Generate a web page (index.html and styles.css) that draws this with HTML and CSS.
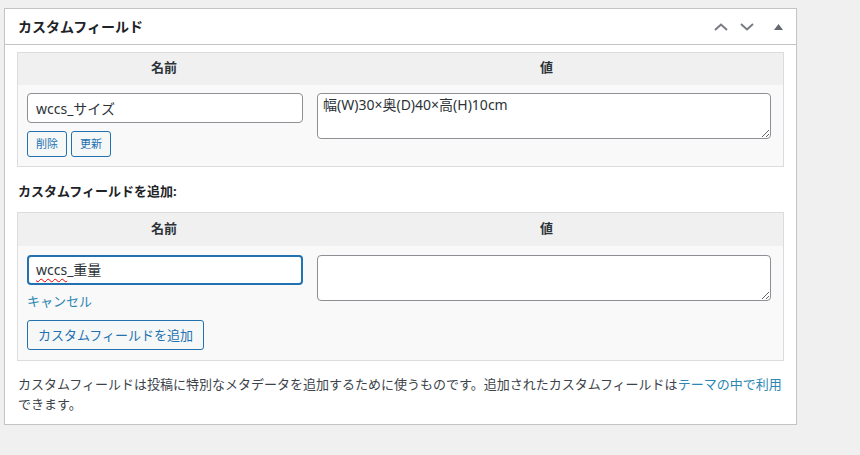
FILE: index.html
```html
<!DOCTYPE html>
<html lang="ja">
<head>
<meta charset="utf-8">
<title>カスタムフィールド</title>
<link rel="stylesheet" href="styles.css">
</head>
<body>
<div class="postbox">
  <div class="postbox-header">
    <h2 class="hndle">カスタムフィールド</h2>
    <div class="handle-actions">
      <button class="handle-btn" aria-label="上へ移動">
        <svg width="14" height="8" viewBox="0 0 14 8"><path d="M1 7 L7 1.5 L13 7" fill="none" stroke="#787c82" stroke-width="2"/></svg>
      </button>
      <button class="handle-btn" aria-label="下へ移動">
        <svg width="14" height="8" viewBox="0 0 14 8"><path d="M1 1 L7 6.5 L13 1" fill="none" stroke="#787c82" stroke-width="2"/></svg>
      </button>
      <button class="handle-btn toggle" aria-label="パネルを切り替え">
        <svg width="9" height="6" viewBox="0 0 9 6"><path d="M4.5 0 L9 6 L0 6 Z" fill="#646970"/></svg>
      </button>
    </div>
  </div>
  <div class="inside">
    <div class="list-table">
      <div class="thead">
        <div class="th name-col">名前</div>
        <div class="th">値</div>
      </div>
      <div class="tbody">
        <div class="td name-col">
          <input class="text" type="text" value="wccs_サイズ">
          <div class="row-actions">
            <button class="button small">削除</button>
            <button class="button small">更新</button>
          </div>
        </div>
        <div class="td">
          <textarea class="value-area tall">幅(W)30×奥(D)40×高(H)10cm</textarea>
        </div>
      </div>
    </div>

    <p class="add-title">カスタムフィールドを追加:</p>

    <div class="list-table add">
      <div class="thead">
        <div class="th name-col">名前</div>
        <div class="th">値</div>
      </div>
      <div class="tbody">
        <div class="td name-col">
          <div class="text focused"><span class="misspelled">wccs</span>_重量</div>
          <a class="cancel" href="#">キャンセル</a>
          <button class="button">カスタムフィールドを追加</button>
        </div>
        <div class="td">
          <textarea class="value-area"></textarea>
        </div>
      </div>
    </div>

    <p class="help">カスタムフィールドは投稿に特別なメタデータを追加するために使うものです。追加されたカスタムフィールドは<a href="#">テーマの中で利用</a>できます。</p>
  </div>
</div>
</body>
</html>
```

FILE: styles.css
```css
* { box-sizing: border-box; }
html, body {
  margin: 0;
  padding: 0;
  background: #f0f0f1;
  font-family: "Noto Sans", "Noto Sans CJK JP", sans-serif;
  font-size: 13px;
  color: #3c434a;
}
.postbox {
  margin: 8px 0 0 4px;
  width: 793px;
  background: #fff;
  border: 1px solid #c3c4c7;
  box-shadow: 0 1px 1px rgba(0,0,0,0.04);
}
.postbox-header {
  height: 36px;
  border-bottom: 1px solid #c3c4c7;
  display: flex;
  align-items: center;
  justify-content: space-between;
}
.hndle {
  margin: 0;
  padding-left: 13px;
  font-size: 14px;
  font-weight: 700;
  color: #1d2327;
  line-height: 1.4;
}
.handle-actions {
  display: flex;
  align-items: center;
  padding-right: 0;
}
.handle-btn {
  border: 0;
  background: none;
  padding: 0;
  margin: 0;
  width: 26px;
  height: 30px;
  display: flex;
  align-items: center;
  justify-content: center;
}
.handle-btn.toggle { width: 36px; }
.inside {
  padding: 7px 12px 10px 12px;
}
.list-table {
  border: 1px solid #dcdcde;
  background: #f9f9f9;
  width: 767px;
}
.thead {
  display: flex;
  background: #f0f0f1;
  height: 32px;
}
.th {
  flex: 1;
  text-align: center;
  font-weight: 700;
  color: #2c3338;
  line-height: 28px;
}
.name-col { flex: 0 0 292px; }
.tbody { display: flex; }
.td { flex: 1; padding: 8px 0 8px 0; }
.td.name-col { padding: 8px 0 8px 9px; }
.td:not(.name-col) { padding: 8px 12px 8px 7px; }
.text {
  display: block;
  width: 276px;
  height: 30px;
  border: 1px solid #8c8f94;
  border-radius: 4px;
  background: #fff;
  font-family: inherit;
  font-size: 14px;
  color: #2c3338;
  padding: 0 8px;
  margin: 0;
  line-height: 28px;
}
.text.focused {
  border: 2px solid #2271b1;
  padding: 0 7px;
  line-height: 26px;
}
.misspelled {
  text-decoration: underline wavy #e00;
  text-decoration-thickness: 1px;
  text-underline-offset: 3px;
}
.row-actions {
  display: flex;
  gap: 4px;
  margin-top: 8px;
}
.button {
  display: inline-block;
  border: 1px solid #2271b1;
  border-radius: 3px;
  background: #f6f7f7;
  color: #2271b1;
  font-family: inherit;
  font-size: 13px;
  height: 30px;
  line-height: 28px;
  padding: 0 10px;
  margin: 0;
}
.button.small {
  font-size: 11px;
  height: 26px;
  line-height: 24px;
  padding: 0 8px;
}
.value-area {
  display: block;
  width: 454px;
  height: 46px;
  border: 1px solid #8c8f94;
  border-radius: 4px;
  background: #fff;
  font-family: inherit;
  font-size: 14px;
  color: #2c3338;
  padding: 1px 5px;
  margin: 0;
  line-height: 1.4;
  resize: both;
}
.tall { height: 46px; }
.list-table .tbody .td:not(.name-col) { padding-bottom: 0; }
.list-table:not(.add) .tbody { height: 81px; }
.add .thead { height: 33px; }
.add .th { line-height: 31px; }
.add .tbody { height: 114px; }
.add .td.name-col { padding-top: 9px; }
.add .td:not(.name-col) { padding-top: 9px; }
.cancel {
  display: block;
  color: #2b87b3;
  text-decoration: none;
  font-size: 13px;
  line-height: 20px;
  margin-top: 6px;
}
.add .button { margin-top: 9px; }
.add-title {
  margin: 14px 0 0 1px;
  font-weight: 700;
  color: #1d2327;
  line-height: 20px;
  height: 31px;
}
.help {
  margin: 13px 0 0 1px;
  line-height: 20px;
  color: #3c434a;
}
.help a { color: #2b87b3; text-decoration: none; }
```
